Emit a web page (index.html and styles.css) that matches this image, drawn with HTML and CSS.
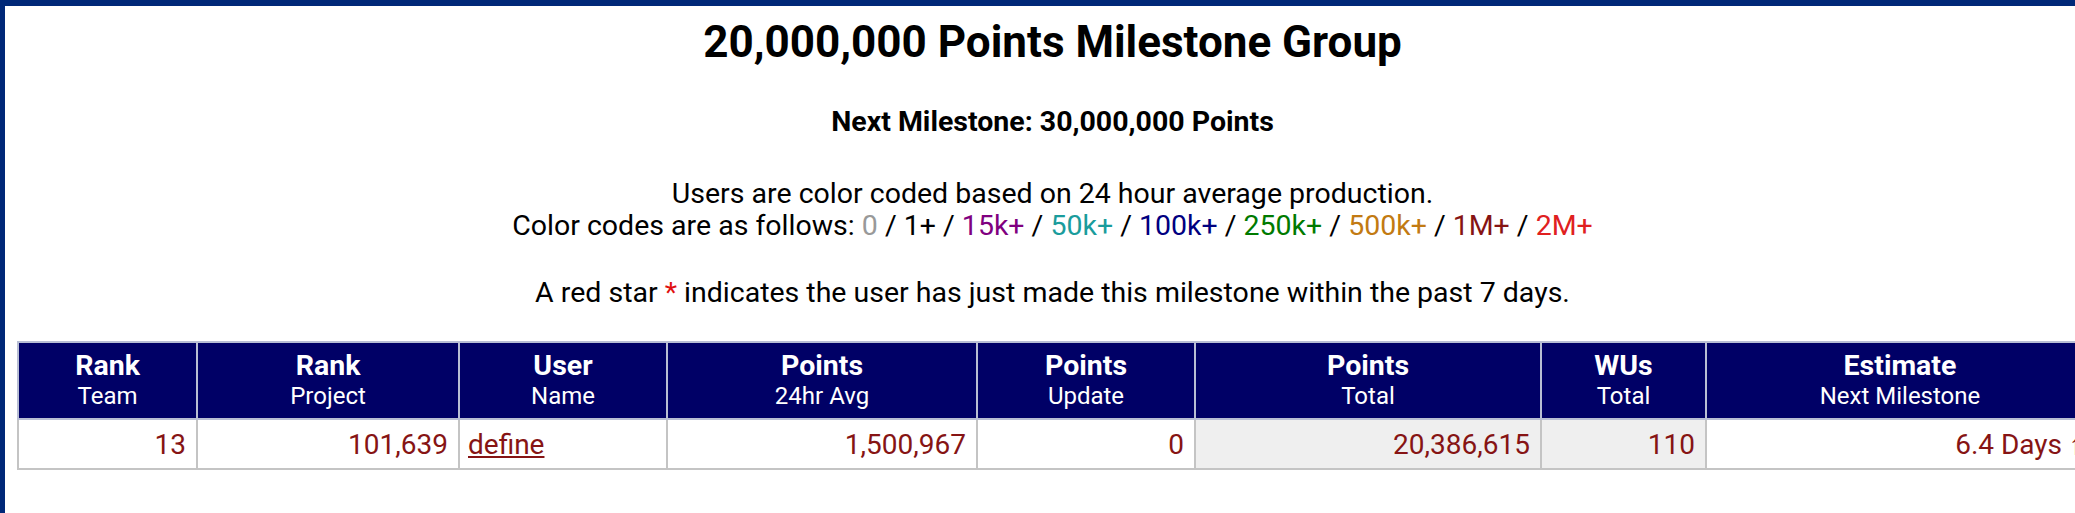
FILE: index.html
```html
<!doctype html>
<html lang="en">
<head>
	<meta charset="utf-8">
	<meta name="viewport" content="width=device-width, initial-scale=1.0">
	<title>20,000,000 Points Milestone Group</title>
	<link rel="stylesheet" href="styles.css">
</head>
<body>
<div class="frame">

<h1 class="title">20,000,000 Points Milestone Group</h1>

<h3 class="next">Next Milestone: 30,000,000 Points</h3>

<p class="legend">
Users are color coded based on 24 hour average production.<br>
Color codes are as follows:
<span class="c0">0</span> /
<span class="c1">1+</span> /
<span class="c15k">15k+</span> /
<span class="c50k">50k+</span> /
<span class="c100k">100k+</span> /
<span class="c250k">250k+</span> /
<span class="c500k">500k+</span> /
<span class="c1m">1M+</span> /
<span class="c2m">2M+</span>
</p>

<p class="legend star-note">A red star <span class="star">*</span> indicates the user has just made this milestone within the past 7 days.</p>

<table class="members">
	<colgroup>
		<col style="width:179px">
		<col style="width:262px">
		<col style="width:208px">
		<col style="width:310px">
		<col style="width:218px">
		<col style="width:346px">
		<col style="width:165px">
		<col style="width:388px">
	</colgroup>
	<thead>
		<tr>
			<th>Rank<span class="sub">Team</span></th>
			<th>Rank<span class="sub">Project</span></th>
			<th>User<span class="sub">Name</span></th>
			<th>Points<span class="sub">24hr Avg</span></th>
			<th>Points<span class="sub">Update</span></th>
			<th>Points<span class="sub">Total</span></th>
			<th>WUs<span class="sub">Total</span></th>
			<th>Estimate<span class="sub">Next Milestone</span></th>
		</tr>
	</thead>
	<tbody>
		<tr class="c1m">
			<td>13</td>
			<td>101,639</td>
			<td class="name"><a href="#">define</a></td>
			<td>1,500,967</td>
			<td>0</td>
			<td class="shade">20,386,615</td>
			<td class="shade">110</td>
			<td>6.4 Days &#8593;</td>
		</tr>
	</tbody>
</table>

</div>
</body>
</html>
```

FILE: styles.css
```css
html, body {
	margin: 0;
	padding: 0;
	background: #fff;
	overflow: hidden;
}
body {
	font-family: Roboto, "Liberation Sans", sans-serif;
	color: #000;
}

.frame {
	box-sizing: border-box;
	width: 2100px;
	min-height: 513px;
	border-top: 6px solid #002878;
	border-left: 5px solid #002878;
	padding: 0 12px 20px 12px;
	text-align: center;
}

.title {
	font-size: 44px;
	line-height: 52px;
	font-weight: 700;
	margin: 10px 0 0 0;
}
.next {
	font-size: 28.5px;
	line-height: 32px;
	font-weight: 700;
	margin: 38px 0 0 0;
}
.legend {
	font-size: 28.5px;
	line-height: 32px;
	margin: 40px 0 0 0;
}
.star-note {
	margin-top: 35px;
}
.star { color: #e01010; }

/* 24hr average colour codes */
.c0 { color: #999999; }
.c1 { color: #000000; }
.c15k { color: #800080; }
.c50k { color: #1a9c9c; }
.c100k { color: #000080; }
.c250k { color: #007a00; }
.c500k { color: #c27a12; }
.c1m { color: #861414; }
.c2m { color: #e02020; }

.members {
	margin-top: 32px;
	border-collapse: collapse;
	table-layout: fixed;
	width: 2076px;
	border: 2px solid #c4c8d8;
}
.members th {
	background: #000066;
	color: #fff;
	font-size: 28.5px;
	line-height: 28px;
	font-weight: 700;
	padding: 9px 4px 6px 4px;
	border: 2px solid #b8bed4;
	text-align: center;
}
.members th .sub {
	display: block;
	font-size: 24px;
	font-weight: 400;
	line-height: 32px;
}
.members td {
	font-size: 28px;
	line-height: 32px;
	padding: 9px 10px 7px 10px;
	border: 2px solid #c4c4c4;
	text-align: right;
	white-space: nowrap;
	overflow: hidden;
}
.members td.name {
	text-align: left;
	padding-left: 8px;
}
.members td a {
	color: inherit;
}
.members td.shade {
	background: #efefef;
}
```
